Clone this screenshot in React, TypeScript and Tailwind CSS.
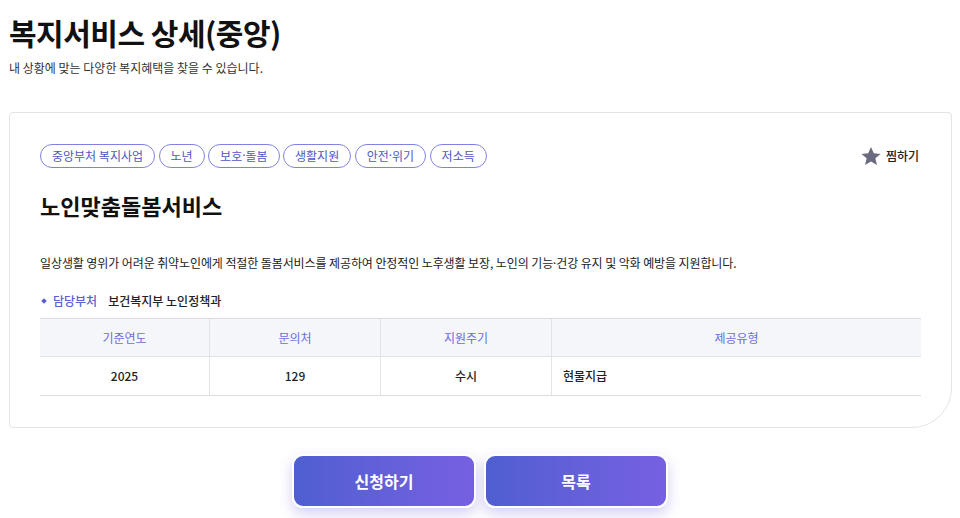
import React from "react";

const Dot = () => <span style={{ fontFamily: '"Noto Sans", sans-serif' }}>·</span>;

const tags: React.ReactNode[] = [
  "중앙부처 복지사업",
  "노년",
  <>보호<Dot />돌봄</>,
  "생활지원",
  <>안전<Dot />위기</>,
  "저소득",
];

export default function App() {
  return (
    <div
      className="w-[960px] h-[518px] bg-white text-[#111] overflow-hidden"
      style={{ fontFamily: '"Noto Sans CJK KR", "Noto Sans", sans-serif' }}
    >
      <div className="pl-[9px] pt-[12px]">
        <h1 className="text-[30px] font-bold leading-[40px] tracking-[-0.5px] text-[#111]">복지서비스 상세(중앙)</h1>
        <p className="mt-[7px] text-[12px] leading-[18px] text-[#333]">내 상황에 맞는 다양한 복지혜택을 찾을 수 있습니다.</p>
      </div>

      <div className="ml-[9px] mt-[35px] w-[943px] h-[316px] border border-[#e4e4e4] rounded-tl-[4px] rounded-tr-[4px] rounded-bl-[4px] rounded-br-[40px] pl-[30px] pr-[31px] pt-[31px]">
        <div className="flex items-center justify-between">
          <div className="flex gap-[3.5px]">
            {tags.map((t, i) => (
              <span
                key={i}
                className="h-[24px] px-[11px] flex items-center rounded-full border border-[#7f82e0] text-[12px] text-[#5156c4]"
              >
                {t}
              </span>
            ))}
          </div>
          <div className="flex items-center gap-[4px] mr-[1px]">
            <svg width="22" height="21" viewBox="0 0 24 24">
              <path d="M12 1.2l3.2 7.1 7.7.7-5.9 5.1 1.8 7.6L12 17.7l-6.8 4 1.8-7.6-5.9-5.1 7.7-.7z" fill="#6b6b80" />
            </svg>
            <span className="text-[12px] font-medium text-[#222]">찜하기</span>
          </div>
        </div>

        <h2 className="mt-[23px] text-[22px] font-bold leading-[28px] text-[#111]">노인맞춤돌봄서비스</h2>

        <p className="mt-[35px] text-[12px] leading-[18px] text-[#222] tracking-[-0.1px]">
          일상생활 영위가 어려운 취약노인에게 적절한 돌봄서비스를 제공하여 안정적인 노후생활 보장, 노인의 기능<Dot />건강 유지 및 악화 예방을 지원합니다.
        </p>

        <div className="mt-[19px] flex items-center text-[12px] leading-[18px]">
          <span className="ml-[2px] w-[4px] h-[4px] bg-[#5a5fd0] rotate-45"></span>
          <span className="ml-[7px] text-[#5a5fd0] font-medium">담당부처</span>
          <span className="ml-[11px] text-[#222] font-medium">보건복지부 노인정책과</span>
        </div>

        <div className="mt-[8px] w-[881px] border-t border-[#dcdde3]">
          <div className="grid grid-cols-[170px_171px_171px_1fr] h-[38px] bg-[#f5f6fa] border-b border-[#e2e3e8] text-[12px] text-[#6a6ddb]">
            <div className="flex items-center justify-center border-r border-[#e2e3e8]">기준연도</div>
            <div className="flex items-center justify-center border-r border-[#e2e3e8]">문의처</div>
            <div className="flex items-center justify-center border-r border-[#e2e3e8]">지원주기</div>
            <div className="flex items-center justify-center">제공유형</div>
          </div>
          <div className="grid grid-cols-[170px_171px_171px_1fr] h-[39px] border-b border-[#dcdde3] text-[12px] font-medium text-[#222]">
            <div className="flex items-center justify-center border-r border-[#e2e3e8]">2025</div>
            <div className="flex items-center justify-center border-r border-[#e2e3e8]">129</div>
            <div className="flex items-center justify-center border-r border-[#e2e3e8]">수시</div>
            <div className="flex items-center pl-[11px]">현물지급</div>
          </div>
        </div>
      </div>

      <div className="mt-[26px] flex justify-center gap-[8px]">
        {["신청하기", "목록"].map((l) => (
          <button
            key={l}
            className="w-[184px] h-[54px] rounded-[11px] border-2 border-white bg-gradient-to-r from-[#4f5fd0] to-[#7660e2] text-white text-[16px] font-bold shadow-[0_6px_14px_rgba(100,90,210,0.28)]"
          >
            {l}
          </button>
        ))}
      </div>
    </div>
  );
}
